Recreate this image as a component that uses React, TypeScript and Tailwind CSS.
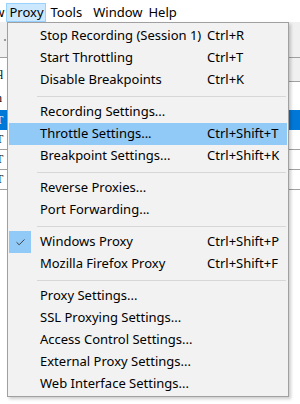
import { Check } from 'lucide-react'

type Item = { label: string; shortcut?: string; active?: boolean; checked?: boolean }

const groups: Item[][] = [
  [
    { label: 'Stop Recording (Session 1)', shortcut: 'Ctrl+R' },
    { label: 'Start Throttling', shortcut: 'Ctrl+T' },
    { label: 'Disable Breakpoints', shortcut: 'Ctrl+K' },
  ],
  [
    { label: 'Recording Settings...' },
    { label: 'Throttle Settings...', shortcut: 'Ctrl+Shift+T', active: true },
    { label: 'Breakpoint Settings...', shortcut: 'Ctrl+Shift+K' },
  ],
  [{ label: 'Reverse Proxies...' }, { label: 'Port Forwarding...' }],
  [
    { label: 'Windows Proxy', shortcut: 'Ctrl+Shift+P', checked: true },
    { label: 'Mozilla Firefox Proxy', shortcut: 'Ctrl+Shift+F' },
  ],
  [
    { label: 'Proxy Settings...' },
    { label: 'SSL Proxying Settings...' },
    { label: 'Access Control Settings...' },
    { label: 'External Proxy Settings...' },
    { label: 'Web Interface Settings...' },
  ],
]

function MenuRow({ item }: { item: Item }) {
  return (
    <div
      className={`mx-[1px] h-[22px] flex items-center ${item.active ? 'bg-[#91c9f7]' : ''}`}
    >
      <div className="w-[22px] h-[22px] flex items-center justify-center">
        {item.checked && (
          <div className="w-[22px] h-[22px] bg-[#91c9f7] flex items-center justify-center">
            <Check size={11} strokeWidth={2} className="text-[#333]" />
          </div>
        )}
      </div>
      <div className="w-[176px] pl-[9px] whitespace-nowrap">{item.label}</div>
      <div className="whitespace-nowrap">{item.shortcut}</div>
    </div>
  )
}

export default function App() {
  return (
    <div className="relative w-[300px] h-[404px] overflow-hidden bg-white text-[13px] text-black font-['Noto_Sans',sans-serif]">
      {/* menu bar */}
      <div className="h-[22px] flex items-end overflow-hidden">
        <span className="-ml-[24px] mr-[2px] h-[19px] leading-[18px]">View</span>
        <span className="h-[19px] pl-[2px] pr-[1px] border border-[#99d1ff] bg-[#cce8ff] leading-[17px]">Proxy</span>
        <span className="h-[19px] ml-[5px] leading-[18px]">Tools</span>
        <span className="h-[19px] ml-[11px] leading-[18px]">Window</span>
        <span className="h-[19px] ml-[6px] leading-[18px]">Help</span>
      </div>

      {/* toolbar */}
      <div className="h-[36px] bg-[#f0f0f0] border-b border-[#a0a0a0] flex items-center">
        <span className="ml-[4px] w-[2px] h-[2px] bg-[#999]" />
      </div>

      {/* session area */}
      <div className="flex h-[52px]">
        <div className="w-[10px] font-['Liberation_Serif',serif] text-[12px] leading-none">
          <div className="mt-[8px] -ml-[3px]">q</div>
          <div className="mt-[14px] -ml-[4px]">h</div>
        </div>
        <div className="flex-1">
          <div className="h-[24px] bg-[#f0f0f0] border-b border-[#a0a0a0]" />
        </div>
      </div>
      <div className="font-['Liberation_Serif',serif] text-[12px]">
        <div className="h-[20px] bg-[#0078d7] text-white leading-[20px] -ml-[4px]">T</div>
        <div className="h-[20px] border-b border-[#a0a0a0] leading-[19px] -ml-[4px]">T</div>
        <div className="h-[20px] border-b border-[#a0a0a0] leading-[19px] -ml-[4px]">T</div>
        <div className="h-[20px] border-b border-[#a0a0a0] leading-[19px] -ml-[4px]">T</div>
      </div>

      {/* proxy menu */}
      <div className="absolute left-[7px] top-[22px] w-[282px] bg-[#f2f2f2] border border-[#a0a0a0] pt-[2px] pb-[1px] shadow-[2px_2px_3px_rgba(0,0,0,0.2)]">
        {groups.map((g, gi) => (
          <div key={gi}>
            {gi > 0 && (
              <div className="h-[10px] flex items-center ml-[29px] mr-[2px]">
                <div className="h-[1px] w-full bg-[#d7d7d7]" />
              </div>
            )}
            {g.map((item) => (
              <MenuRow key={item.label} item={item} />
            ))}
          </div>
        ))}
      </div>
    </div>
  )
}
